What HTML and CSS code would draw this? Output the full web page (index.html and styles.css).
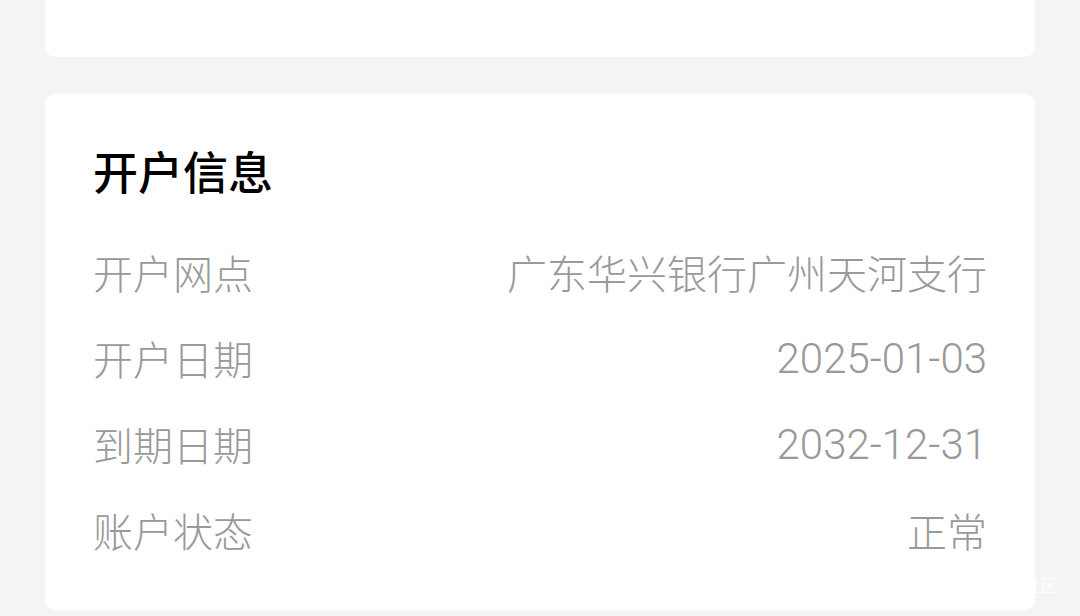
FILE: index.html
```html
<!DOCTYPE html>
<html lang="zh-CN">
<head>
<meta charset="utf-8">
<link rel="stylesheet" href="styles.css">
</head>
<body>
<div class="page">
  <div class="card card-top"></div>
  <div class="card card-info">
    <div class="title">开户信息</div>
    <div class="row"><span class="label">开户网点</span><span class="value">广东华兴银行广州天河支行</span></div>
    <div class="row"><span class="label">开户日期</span><span class="value num">2025-01-03</span></div>
    <div class="row"><span class="label">到期日期</span><span class="value num">2032-12-31</span></div>
    <div class="row"><span class="label">账户状态</span><span class="value">正常</span></div>
  </div>
  <div class="watermark">社区</div>
</div>
</body>
</html>
```

FILE: styles.css
```css
html, body {
  margin: 0;
  padding: 0;
  background: #f4f4f4;
}
body {
  font-family: "Noto Sans CJK SC", "Noto Sans", sans-serif;
  width: 1080px;
  height: 616px;
  overflow: hidden;
}
.page {
  position: relative;
  padding: 0 45px;
  display: flex;
  flex-direction: column;
  gap: 37px;
  height: 616px;
  box-sizing: border-box;
}
.card {
  background: #ffffff;
  border-radius: 10px;
}
.card-top {
  height: 57px;
  border-radius: 0 0 10px 10px;
}
.card-info {
  height: 516px;
  box-sizing: border-box;
  padding: 47px 48px 0 48px;
  display: flex;
  flex-direction: column;
}
.title {
  font-size: 45px;
  line-height: 60px;
  font-weight: 500;
  color: #000;
  margin-bottom: 28px;
}
.row {
  display: flex;
  justify-content: space-between;
  align-items: center;
  height: 86px;
  font-size: 40px;
  font-weight: 300;
  color: #999999;
}
.num {
  font-family: Roboto, "Noto Sans", sans-serif;
  font-size: 42px;
  font-weight: 300;
}
.watermark {
  position: absolute;
  left: 1024px;
  top: 574px;
  font-size: 17px;
  line-height: 22px;
  color: rgba(255,255,255,0.85);
}
```
